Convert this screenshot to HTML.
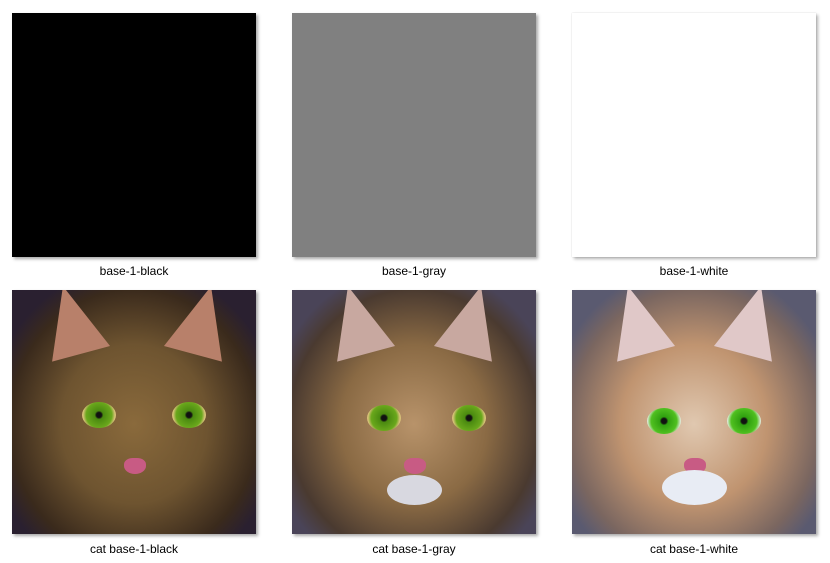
<!DOCTYPE html>
<html><head><style>
body{margin:0;width:830px;height:563px;background:#fff;position:relative;overflow:hidden;font-family:"Segoe UI","Liberation Sans",sans-serif;}
.t{position:absolute;width:244px;height:244px;box-shadow:2px 2px 3px rgba(0,0,0,0.35);overflow:hidden}
.l{position:absolute;width:244px;text-align:center;font-size:12px;color:#000}
.eye{position:absolute;width:34px;height:26px;border-radius:50%;background:radial-gradient(circle,#111 0 12%,#4a8a10 20%,#6aa81c 60%,#d9c27a 75%,#c8a860 100%)}
.nose{position:absolute;left:112px;top:168px;width:22px;height:16px;border-radius:40% 40% 50% 50%;background:#c85b84}
.ear{position:absolute;width:0;height:0;border-left:30px solid transparent;border-right:30px solid transparent;border-bottom:70px solid #b8806a}
</style></head><body>
<div class="t" style="left:12px;top:13px;background:#000"></div>
<div class="t" style="left:292px;top:13px;background:#808080"></div>
<div class="t" style="left:572px;top:13px;background:#fff;box-shadow:2px 2px 3px rgba(0,0,0,0.3),0 0 1px rgba(0,0,0,0.2)"></div>
<div class="l" style="left:12px;top:264px">base-1-black</div>
<div class="l" style="left:292px;top:264px">base-1-gray</div>
<div class="l" style="left:572px;top:264px">base-1-white</div>

<div class="t" style="left:12px;top:290px;background:radial-gradient(ellipse 60% 65% at 50% 55%,#8a6a3c 0,#6e5430 50%,#3a2a1c 85%,#2a2030 100%)">
<div class="ear" style="left:30px;top:-5px;transform:rotate(-15deg)"></div><div class="ear" style="left:160px;top:-5px;transform:rotate(15deg)"></div>
<div class="eye" style="left:70px;top:112px"></div><div class="eye" style="left:160px;top:112px"></div><div class="nose"></div></div>
<div class="t" style="left:292px;top:290px;background:radial-gradient(ellipse 60% 65% at 50% 55%,#b8936a 0,#8a6a44 50%,#4a3a30 85%,#4a4458 100%)">
<div class="ear" style="left:35px;top:-5px;transform:rotate(-15deg);border-bottom-color:#c8a8a0"></div><div class="ear" style="left:150px;top:-5px;transform:rotate(15deg);border-bottom-color:#c8a8a0"></div>
<div class="eye" style="left:75px;top:115px"></div><div class="eye" style="left:160px;top:115px"></div><div class="nose"></div>
<div style="position:absolute;left:95px;top:185px;width:55px;height:30px;border-radius:50%;background:#d8d8e0"></div></div>
<div class="t" style="left:572px;top:290px;background:radial-gradient(ellipse 60% 65% at 50% 55%,#e0c8b0 0,#c09470 50%,#7a6660 85%,#5a5a70 100%)">
<div class="ear" style="left:35px;top:-5px;transform:rotate(-15deg);border-bottom-color:#e0c8c8"></div><div class="ear" style="left:150px;top:-5px;transform:rotate(15deg);border-bottom-color:#e0c8c8"></div>
<div class="eye" style="left:75px;top:118px;background:radial-gradient(circle,#111 0 12%,#30a010 20%,#50c020 60%,#f0f0f0 80%)"></div><div class="eye" style="left:155px;top:118px;background:radial-gradient(circle,#111 0 12%,#30a010 20%,#50c020 60%,#f0f0f0 80%)"></div><div class="nose"></div>
<div style="position:absolute;left:90px;top:180px;width:65px;height:35px;border-radius:50%;background:#e8ecf4"></div></div>
<div class="l" style="left:12px;top:542px">cat base-1-black</div>
<div class="l" style="left:292px;top:542px">cat base-1-gray</div>
<div class="l" style="left:572px;top:542px">cat base-1-white</div>
</body></html>
